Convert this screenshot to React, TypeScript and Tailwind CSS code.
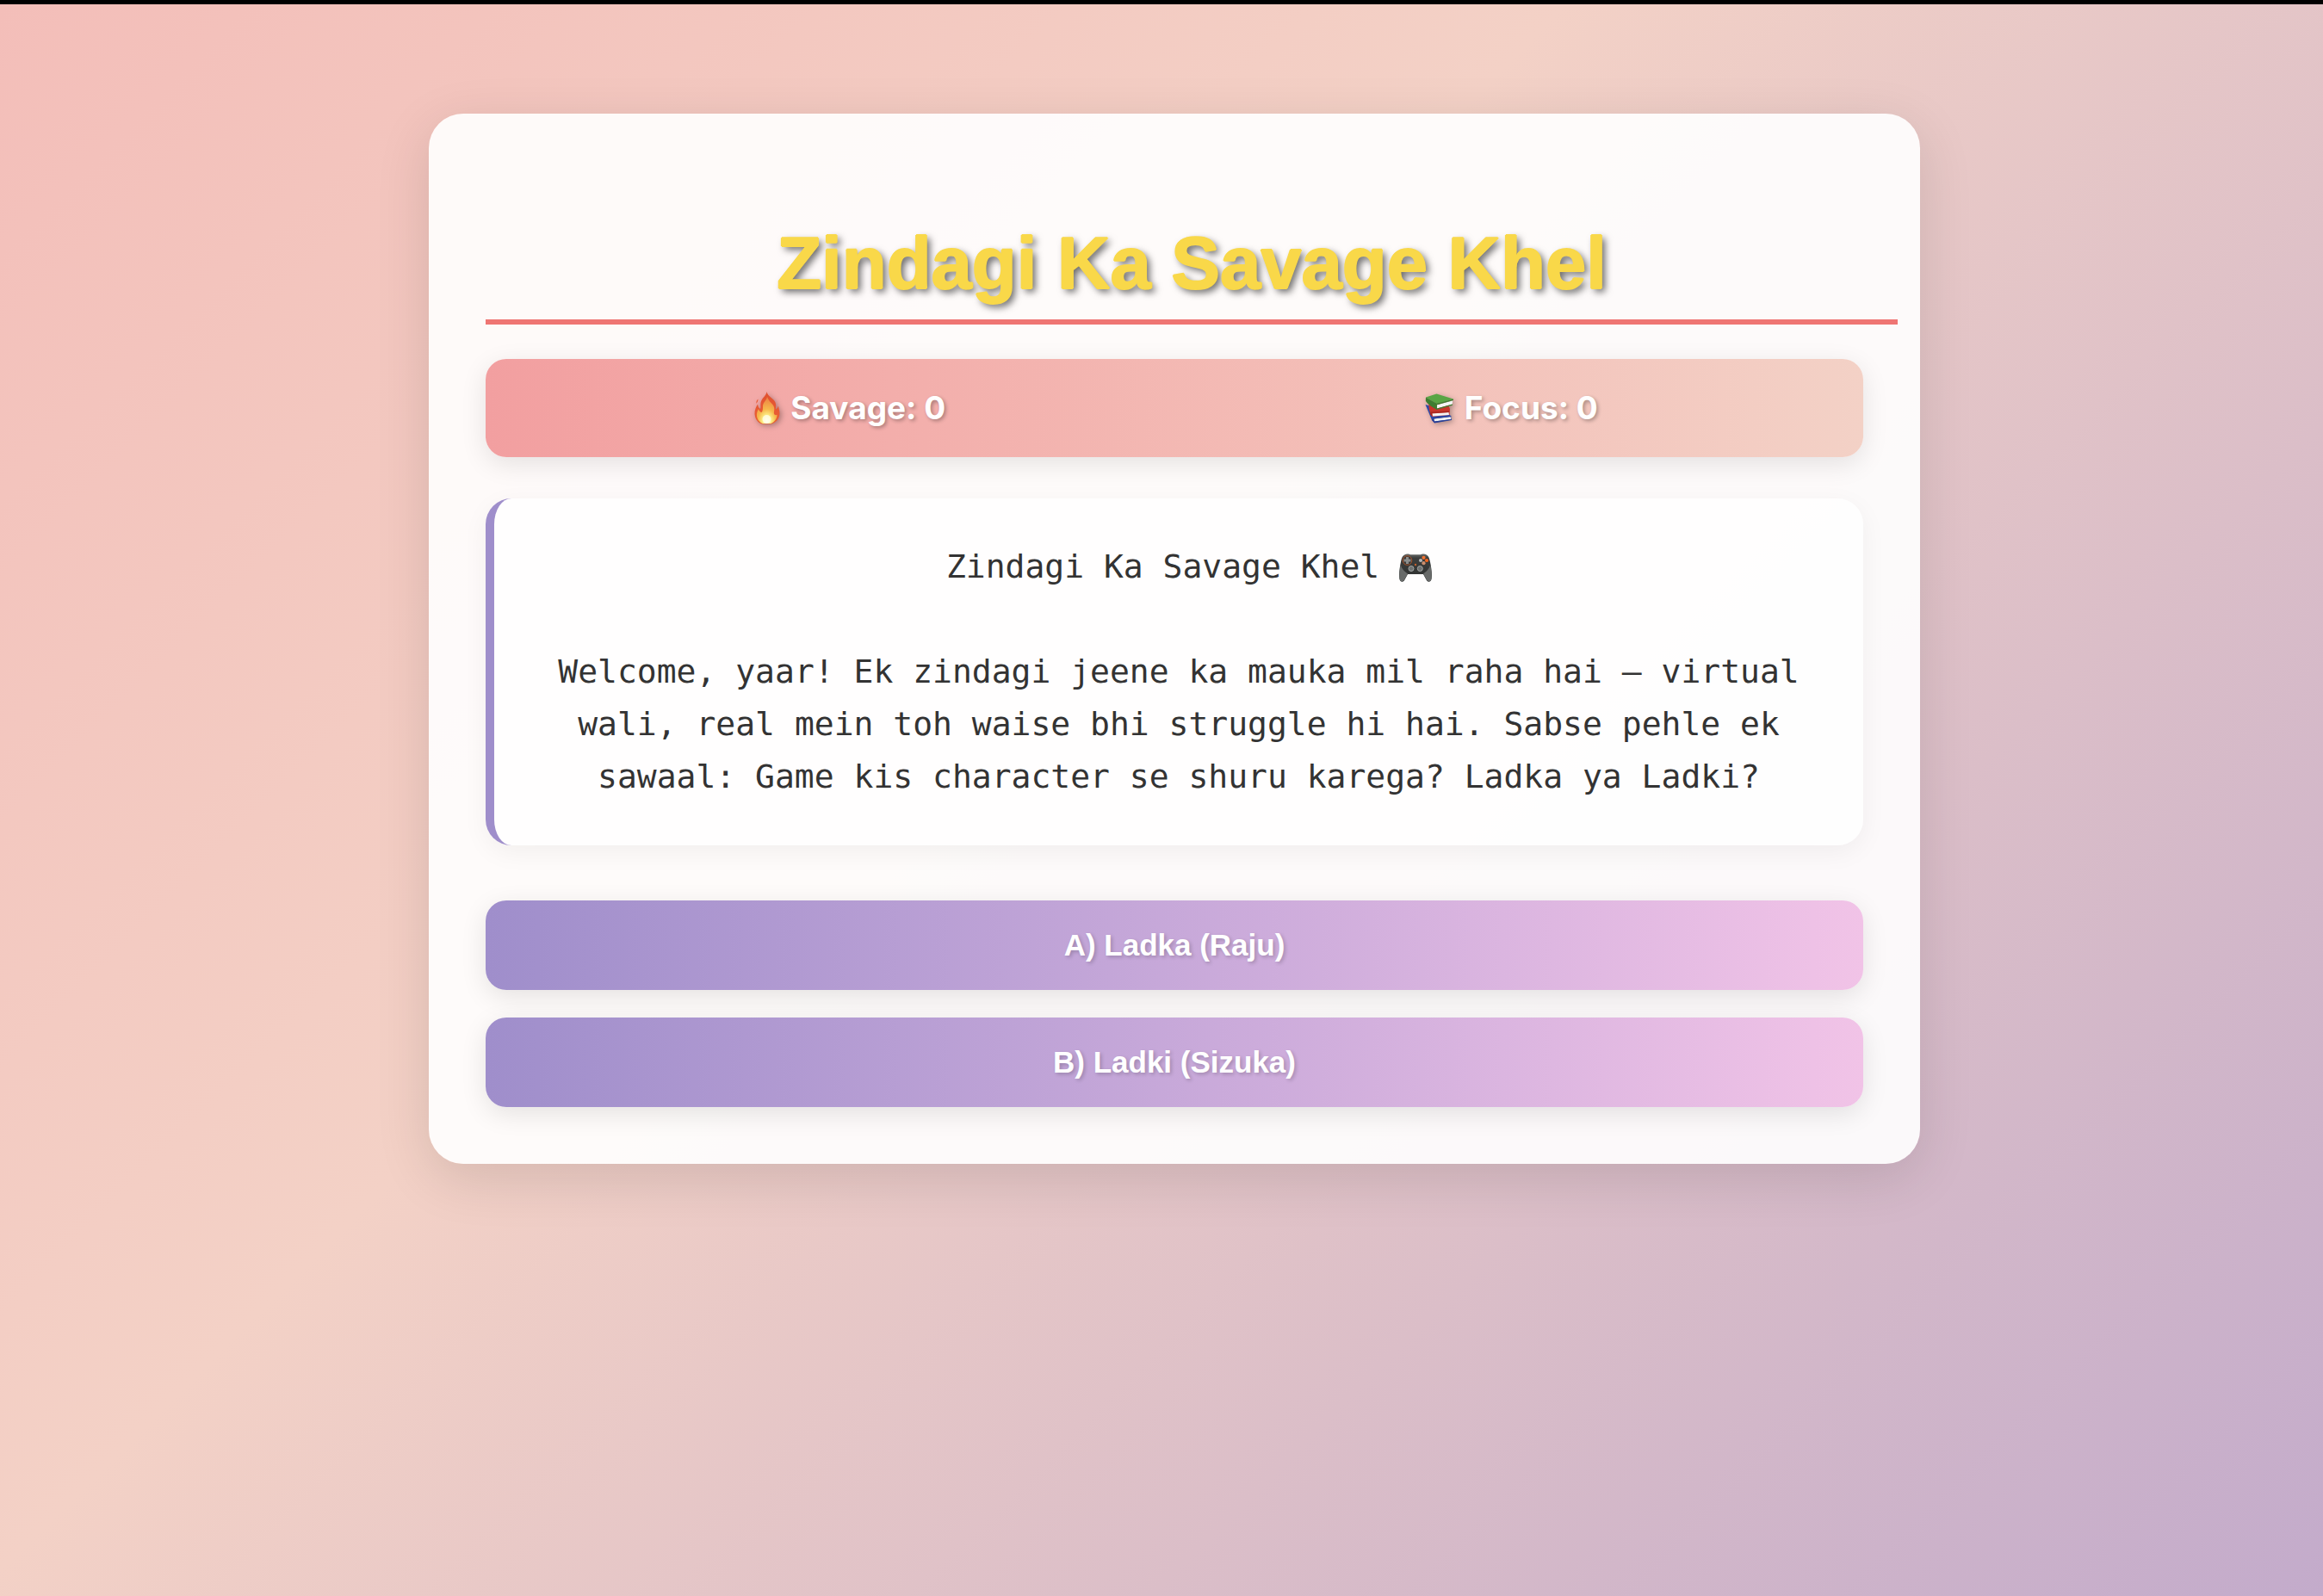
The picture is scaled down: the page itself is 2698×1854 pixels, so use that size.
function Fire() {
  return (
    <svg viewBox="0 0 30 38" className="h-[38px] w-[30px] drop-shadow-[2px_2px_3px_rgba(0,0,0,0.3)]" aria-hidden="true">
      <defs>
        <linearGradient id="flameOuter" x1="0" y1="0" x2="0" y2="1">
          <stop offset="0" stopColor="#e0502f" />
          <stop offset="0.6" stopColor="#e85a34" />
          <stop offset="1" stopColor="#e8622f" />
        </linearGradient>
        <radialGradient id="flameInner" cx="0.5" cy="0.9" r="0.8">
          <stop offset="0" stopColor="#ffffe8" />
          <stop offset="0.25" stopColor="#fdf08a" />
          <stop offset="0.55" stopColor="#f6b84c" />
          <stop offset="1" stopColor="#ee8a45" />
        </radialGradient>
      </defs>
      <path fill="url(#flameOuter)" d="M14.500 0c-.5 5-6 7-7 13-.5 3 .5 5-.5 7-2-1-2.500-3-3-5.500C2 18 .3 21 .5 26 1 32.500 5 36.500 9 37.500h11c5-1.500 9.500-6 9.500-12.500 0-3-1-5.500-1.500-8.500-.8 2-1.500 3-3 4 .5-5 .5-8-3-11.500-3-2.500-6.500-5-7.500-9z" />
      <path fill="url(#flameInner)" d="M15 6c-.5 4-5 6-5 11 0 3 0 5.500-1.500 7-2-.5-3-2-3.500-4-1.500 3-2.500 5-2 8.500.6 4.500 4 7.500 7 8.500h9c3.500-1.200 7.500-5 7.500-10-1 0-2 .5-3-.5-1.500-2 .5-5-.5-8.500-1-4-6-6-8-12z" />
      <path fill="#e85a34" d="M4.500 8.500c-1.500 1-2.500 3-2 5.500.8-1.500 2-3 2-5.500z" />
      <ellipse cx="14.500" cy="32" rx="5" ry="5" fill="#fffff0" opacity="0.75" />
    </svg>
  );
}

function Books() {
  return (
    <svg viewBox="0 0 34 35" className="h-[35px] w-[34px] drop-shadow-[2px_2px_3px_rgba(0,0,0,0.3)]" aria-hidden="true">
      <path fill="#2f49a8" d="M.5 13l7 2 22 10.500 1.500 5L11 34 8 31z" />
      <path fill="#f1f1f1" d="M9.500 29.500l20-2.500.8 3L11 32.500z" />
      <path fill="#2a3f95" d="M8 31l1.500-2.500L30.500 26v1l-20 2.500.5 3 20-2.500v1L11 34.500z" />
      <path fill="#c9352b" d="M4.500 11L27 13l2 5-.5 7L8.500 27C6 25 4 17 4.500 11z" />
      <path fill="#f4f4f4" d="M8 23.500l19.500-1.500.5 3L9 26.500z" />
      <path fill="#a92821" d="M6.500 21.500L28 20.500v1.500L8.500 23v3.500L6 24.500z" />
      <path fill="#59a544" d="M1 4.500L13.500.5 33 6.500 14 12z" />
      <path fill="#3e7d31" d="M1 4.500L14 12l-1.500 2.500.8 4C8 16 2 11.500.8 8.500z" />
      <path fill="#f5f5f5" d="M14 13.200l18-4.700-.2 4L14 17.500z" />
      <path fill="#3e7d31" d="M13 12l20-5.500V8l-19 5.200v4.300l18-5v1.200L13.500 19l-1.300-1.500z" />
    </svg>
  );
}

function Gamepad() {
  return (
    <svg viewBox="0 0 38 33" className="inline-block h-[33px] w-[38px] align-[-5px]" aria-hidden="true">
      <defs>
        <linearGradient id="padBody" x1="0" y1="0" x2="0" y2="1">
          <stop offset="0" stopColor="#6b6e6c" />
          <stop offset="0.15" stopColor="#3c3e3d" />
          <stop offset="1" stopColor="#2e302f" />
        </linearGradient>
      </defs>
      <path fill="url(#padBody)" d="M8 .8c2-.8 4-.3 5 .5h12c1-.8 3-1.300 5-.5 4 1 5 4 6 9 1.500 7 2.500 15 1.500 20-.6 3.500-4 3.800-5.500 1.500L28 24H10L6 31.300C4.500 33.600 1.100 33.300.5 29.800c-1-5 0-13 1.500-20 1-5 2-8 6-9z" />
      <path fill="#686a69" d="M1.800 13C.4 20 0 27 .7 30c.8 3 3.800 3 5 1l4.300-7.500C6.500 21 3 18 1.800 13zM36.200 13c1.400 7 1.800 14 1.100 17-.8 3-3.800 3-5 1L28 23.500c3.500-2.500 7-5.500 8.200-10.500z" />
      <circle cx="9.500" cy="8" r="5.300" fill="#3a3b3a" stroke="#a8532b" strokeWidth="1" />
      <path fill="#8b8e8d" d="M8 4h3v2.500h2.500v3H11V12H8V9.500H5.500v-3H8z" />
      <circle cx="28.500" cy="4.800" r="2.100" fill="#f27230" />
      <circle cx="32" cy="8" r="2.100" fill="#f2641e" />
      <circle cx="25" cy="8" r="2.100" fill="#b4b4b4" />
      <circle cx="28.500" cy="11.200" r="2.100" fill="#c98d6d" />
      <circle cx="19" cy="13" r="1.200" fill="#c3602c" />
      <circle cx="14" cy="17.500" r="3" fill="#6e7170" stroke="#a3a6a5" strokeWidth="1" />
      <circle cx="24.300" cy="17.500" r="3" fill="#6e7170" stroke="#a3a6a5" strokeWidth="1" />
    </svg>
  );
}

const choices = ["A) Ladka (Raju)", "B) Ladki (Sizuka)"];

export default function App() {
  return (
    <div className="min-h-screen border-t-[5px] border-black bg-[linear-gradient(135deg,#f3beb9_0%,#f3d1c6_40%,#dbbec8_70%,#c3abcb_100%)] pt-[127px] pl-[30px]">
      <main className="mx-auto w-full max-w-[1732px] rounded-[40px] bg-white/91 p-[66px] shadow-[0_16px_64px_rgba(0,0,0,0.12)]">
        <h1 className="-mr-10 mb-10 border-b-6 border-[#ef7573] pt-[58px] pb-4 text-center font-['Liberation_Sans',Arial,sans-serif] text-[85px] leading-[99px] font-bold text-[#f9d849] [text-shadow:1px_0_#f9d849,-1px_0_#f9d849,0_1px_#f9d849,0_-1px_#f9d849,4px_4px_8px_rgba(0,0,0,0.6)]">
          Zindagi Ka Savage Khel
        </h1>
        <div className="mb-12 flex h-[114px] items-center justify-around rounded-3xl bg-linear-to-r from-[#f29fa0] to-[#f3d1c6] px-8 font-['Inter',sans-serif] text-[37px] font-bold text-white shadow-[0_8px_30px_rgba(0,0,0,0.1)] [text-shadow:2px_2px_4px_rgba(0,0,0,0.3)]">
          <div className="flex items-center gap-3 pl-1">
            <Fire />
            <span>Savage: 0</span>
          </div>
          <div className="flex items-center gap-3 pl-1">
            <Books />
            <span>Focus: 0</span>
          </div>
        </div>
        <p className="mb-16 rounded-[30px] border-l-10 border-[#9f8ecb] bg-white/80 px-12 py-[49px] text-center font-['DejaVu_Sans_Mono',monospace] text-[38px] leading-[61px] text-[#333] shadow-[0_8px_30px_rgba(0,0,0,0.05)]">
          <span className="block h-[122px] pl-6">
            Zindagi Ka Savage Khel <Gamepad />
          </span>
          Welcome, yaar! Ek zindagi jeene ka mauka mil raha hai — virtual wali, real mein toh waise bhi struggle hi hai. Sabse pehle ek sawaal: Game kis character se shuru karega? Ladka ya Ladki?
        </p>
        <div className="flex flex-col gap-8">
          {choices.map((choice) => (
            <button
              key={choice}
              type="button"
              className="h-[104px] rounded-3xl bg-linear-to-r from-[#9f8ecb] to-[#f1c3e7] font-['Liberation_Sans',Arial,sans-serif] text-[35px] font-bold text-white shadow-[0_8px_30px_rgba(0,0,0,0.1)] [text-shadow:2px_2px_4px_rgba(0,0,0,0.2)]"
            >
              {choice}
            </button>
          ))}
        </div>
      </main>
    </div>
  );
}
